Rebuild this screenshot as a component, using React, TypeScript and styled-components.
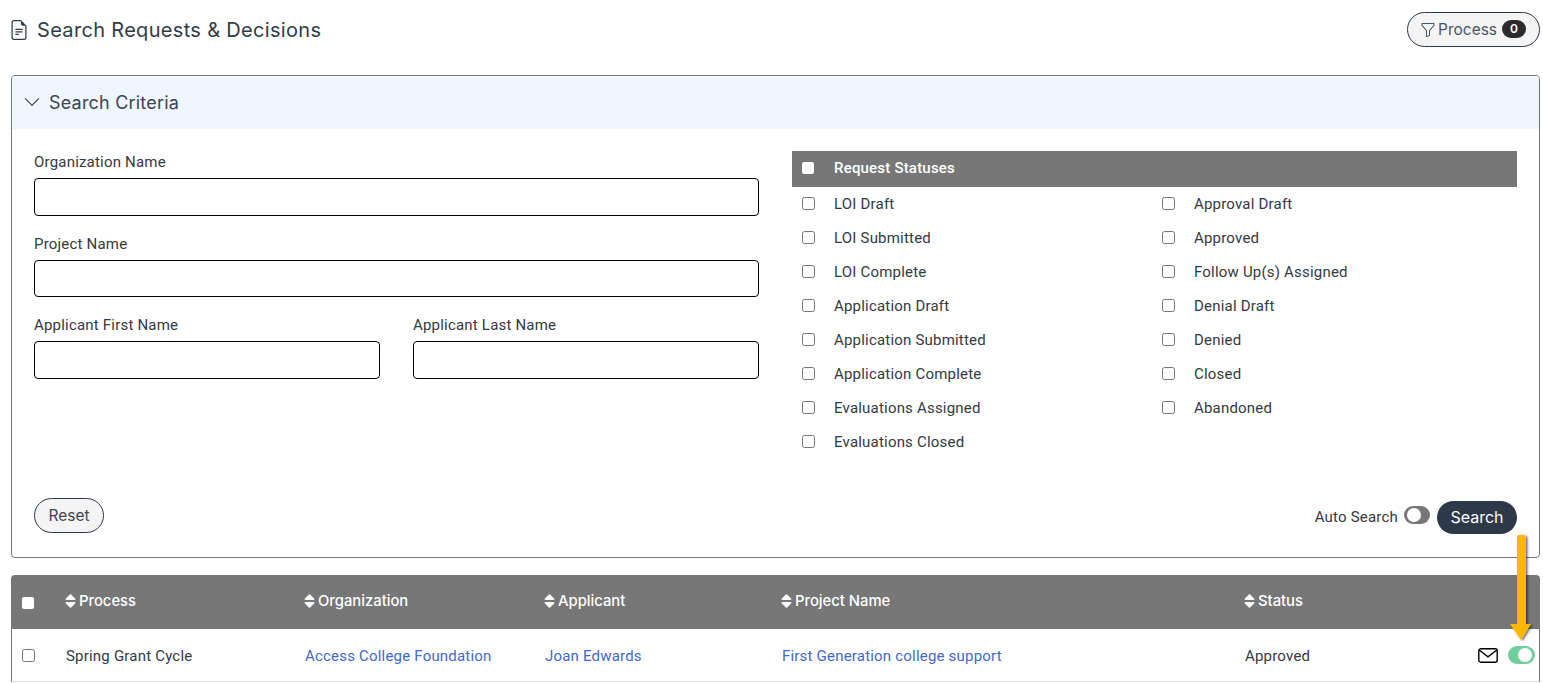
import React from 'react';
import styled, { createGlobalStyle } from 'styled-components';
import { BsChevronDown, BsFileEarmarkText, BsFunnel } from 'react-icons/bs';
import { FaSort } from 'react-icons/fa';

const heading = `'Inter', 'Open Sans', sans-serif`;
const body = `'Roboto', 'Liberation Sans', sans-serif`;

const GlobalStyle = createGlobalStyle`
    html, body {
        margin: 0;
        height: 100%;
        overflow: hidden;
        background: #fff;
    }
    * {
        box-sizing: border-box;
    }
`;

const Page = styled.div`
    position: relative;
    width: 1543px;
    height: 683px;
    overflow: hidden;
    padding: 0 3px 0 11px;
    font-family: ${body};
    font-size: 15px;
    letter-spacing: 0.2px;
    color: #333a42;
`;

const TitleRow = styled.div`
    height: 75px;
    padding-top: 12px;
    display: flex;
    align-items: flex-start;
    justify-content: space-between;
`;

const Title = styled.h1`
    margin: 0;
    height: 36px;
    display: flex;
    align-items: center;
    gap: 8.5px;
    font-family: ${heading};
    font-weight: 400;
    font-size: 20px;
    letter-spacing: 0.32px;
    color: #323c48;
    svg {
        font-size: 20px;
        margin-left: -2.5px;
    }
`;

const ProcessButton = styled.button`
    width: 133px;
    height: 35px;
    padding: 0 0 0 12px;
    display: flex;
    align-items: center;
    border: 1px solid #2d3848;
    border-radius: 18px;
    background: #f4f4f4;
    font-family: ${heading};
    font-size: 15.5px;
    color: #4a5563;
    svg {
        font-size: 16px;
        margin-right: 2px;
    }
`;

const CountBadge = styled.span`
    margin-left: 5px;
    margin-top: -1px;
    width: 24px;
    height: 18px;
    border-radius: 9px;
    background: #2b2b2b;
    color: #fff;
    font-size: 12px;
    font-weight: 600;
    line-height: 18px;
    text-align: center;
`;

const Panel = styled.section`
    height: 483px;
    border: 1px solid #777;
    border-radius: 4px;
    overflow: hidden;
`;

const PanelHeader = styled.div`
    height: 53px;
    padding: 0 0 1px 11px;
    display: flex;
    align-items: center;
    gap: 8px;
    background: #eff6fd;
    font-family: ${heading};
    font-size: 18px;
    letter-spacing: 0.2px;
    color: #3c4552;
    svg {
        font-size: 18px;
    }
`;

const PanelBody = styled.div`
    height: 428px;
    padding: 22px 22px 0;
    display: flex;
    flex-direction: column;
`;

const CriteriaGrid = styled.div`
    height: 346px;
    display: grid;
    grid-template-columns: 725px 725px;
    column-gap: 33px;
`;

const Fields = styled.div`
    display: grid;
    grid-template-columns: 346px 346px;
    column-gap: 33px;
    grid-auto-rows: 81.5px;
`;

const Field = styled.label<{ $wide?: boolean }>`
    grid-column: ${(p) => (p.$wide ? '1 / -1' : 'auto')};
    display: flex;
    flex-direction: column;
    gap: 7px;
    line-height: 18px;
    padding-top: 2px;
`;

const TextInput = styled.input`
    width: 100%;
    height: 37.5px;
    flex: none;
    border: 1px solid #000;
    border-radius: 4px;
    background: #fff;
`;

const StatusHeader = styled.div`
    height: 36px;
    padding: 0 0 2px 10px;
    display: flex;
    align-items: center;
    gap: 20px;
    background: #777;
    color: #fff;
    font-weight: 500;
`;

const StatusGrid = styled.div`
    display: grid;
    grid-template-columns: 360px 1fr;
    grid-template-rows: repeat(8, 34px);
    grid-auto-flow: column;
`;

const StatusRow = styled.label`
    padding-left: 10px;
    display: flex;
    align-items: center;
    gap: 19px;
`;

const Check = styled.span<{ $filled?: boolean }>`
    width: ${(p) => (p.$filled ? '12px' : '13px')};
    height: ${(p) => (p.$filled ? '12px' : '13px')};
    flex: none;
    margin-bottom: 1px;
    border: 1px solid ${(p) => (p.$filled ? '#fff' : '#767676')};
    border-radius: ${(p) => (p.$filled ? '1.5px' : '2.5px')};
    background: ${(p) => (p.$filled ? '#fff' : 'transparent')};
`;

const ActionRow = styled.div`
    height: 36px;
    display: flex;
    align-items: center;
    justify-content: space-between;
`;

const ResetButton = styled.button`
    width: 70px;
    height: 35px;
    border: 1px solid #2d3848;
    border-radius: 18px;
    background: #f4f4f4;
    font-family: ${heading};
    font-size: 15.5px;
    color: #3c4552;
    padding: 0;
`;

const SearchGroup = styled.div`
    display: flex;
    align-items: center;
    margin-top: 4px;
`;

const AutoLabel = styled.span`
    margin-right: 6px;
`;

const Toggle = styled.span<{ $on?: boolean }>`
    width: ${(p) => (p.$on ? '27px' : '26px')};
    height: 18px;
    padding: 2px 3px;
    margin-bottom: ${(p) => (p.$on ? '0' : '4px')};
    display: flex;
    justify-content: ${(p) => (p.$on ? 'flex-end' : 'flex-start')};
    border-radius: 9px;
    background: ${(p) => (p.$on ? '#6fcf9c' : '#777')};
    &::after {
        content: '';
        width: 14px;
        height: 14px;
        border-radius: 50%;
        background: #fff;
    }
`;

const SearchButton = styled.button`
    width: 80px;
    height: 33px;
    margin-left: 7px;
    border: 0;
    border-radius: 17px;
    background: #2d3848;
    color: #fff;
    font-family: ${heading};
    font-size: 16px;
    padding: 0;
`;

const Table = styled.div`
    margin-top: 17px;
    border-radius: 4px 4px 0 0;
    overflow: hidden;
    width: 1529px;
`;

const columns = '54px 239px 240px 237px 463px 1fr';

const HeadRow = styled.div`
    height: 54px;
    display: grid;
    grid-template-columns: ${columns};
    align-items: center;
    background: #777;
    color: #fff;
    font-family: ${heading};
    font-size: 14.8px;
    font-weight: 500;
    letter-spacing: 0;
`;

const HeadCell = styled.div`
    margin-top: -3px;
    display: flex;
    align-items: center;
    gap: 3px;
    svg {
        width: 11px;
        height: 18px;
    }
`;

const BoxCell = styled.div<{ $head?: boolean }>`
    padding: ${(p) => (p.$head ? '3px' : '1px')} 0 0 ${(p) => (p.$head ? '11px' : '10px')};
    display: flex;
`;

const BodyRow = styled.div`
    height: 53px;
    display: grid;
    grid-template-columns: ${columns};
    align-items: center;
    border-left: 1px solid #777;
    border-right: 1px solid #777;
    border-bottom: 1px solid #ddd;
`;

const Cell = styled.div`
    margin-left: -1px;
    padding: 2px 0 0 1px;
`;

const NameLink = styled.a`
    margin-left: -1px;
    padding: 2px 0 0 1px;
    color: #4169c8;
    text-decoration: none;
`;

const StatusCell = styled(Cell)`
    display: flex;
    align-items: center;
    justify-content: space-between;
`;

const RowActions = styled.div`
    margin-top: -2px;
    display: flex;
    align-items: center;
    gap: 10px;
    padding-right: 4px;
`;

const ArrowOverlay = styled.svg`
    position: absolute;
    left: 1500px;
    top: 530px;
    width: 44px;
    height: 112px;
    overflow: visible;
`;

const leftStatuses = [
    'LOI Draft',
    'LOI Submitted',
    'LOI Complete',
    'Application Draft',
    'Application Submitted',
    'Application Complete',
    'Evaluations Assigned',
    'Evaluations Closed',
];

const rightStatuses = [
    'Approval Draft',
    'Approved',
    'Follow Up(s) Assigned',
    'Denial Draft',
    'Denied',
    'Closed',
    'Abandoned',
];

const headers = ['Process', 'Organization', 'Applicant', 'Project Name', 'Status'];

const MailIcon = () => (
    <svg width="20" height="15" viewBox="0 0 20 15" fill="none" stroke="#000" strokeWidth="1.4">
        <rect x="0.8" y="0.8" width="18.4" height="13.4" rx="2" />
        <path d="M1.2 2 L10 8.8 L18.8 2" />
    </svg>
);

export default function App() {
    return (
        <Page>
            <GlobalStyle />
            <TitleRow>
                <Title>
                    <BsFileEarmarkText />
                    Search Requests &amp; Decisions
                </Title>
                <ProcessButton>
                    <BsFunnel />
                    Process
                    <CountBadge>0</CountBadge>
                </ProcessButton>
            </TitleRow>

            <Panel>
                <PanelHeader>
                    <BsChevronDown />
                    Search Criteria
                </PanelHeader>
                <PanelBody>
                    <CriteriaGrid>
                        <Fields>
                            <Field $wide>
                                Organization Name
                                <TextInput />
                            </Field>
                            <Field $wide>
                                Project Name
                                <TextInput />
                            </Field>
                            <Field>
                                Applicant First Name
                                <TextInput />
                            </Field>
                            <Field>
                                Applicant Last Name
                                <TextInput />
                            </Field>
                        </Fields>
                        <div>
                            <StatusHeader>
                                <Check $filled />
                                Request Statuses
                            </StatusHeader>
                            <StatusGrid>
                                {[...leftStatuses, ...rightStatuses].map((status) => (
                                    <StatusRow key={status}>
                                        <Check />
                                        {status}
                                    </StatusRow>
                                ))}
                            </StatusGrid>
                        </div>
                    </CriteriaGrid>
                    <ActionRow>
                        <ResetButton>Reset</ResetButton>
                        <SearchGroup>
                            <AutoLabel>Auto Search</AutoLabel>
                            <Toggle />
                            <SearchButton>Search</SearchButton>
                        </SearchGroup>
                    </ActionRow>
                </PanelBody>
            </Panel>

            <Table>
                <HeadRow>
                    <BoxCell $head>
                        <Check $filled />
                    </BoxCell>
                    {headers.map((header) => (
                        <HeadCell key={header}>
                            <FaSort />
                            {header}
                        </HeadCell>
                    ))}
                </HeadRow>
                <BodyRow>
                    <BoxCell>
                        <Check />
                    </BoxCell>
                    <Cell>Spring Grant Cycle</Cell>
                    <NameLink href="#">Access College Foundation</NameLink>
                    <NameLink href="#">Joan Edwards</NameLink>
                    <NameLink href="#">First Generation college support</NameLink>
                    <StatusCell>
                        Approved
                        <RowActions>
                            <MailIcon />
                            <Toggle $on />
                        </RowActions>
                    </StatusCell>
                </BodyRow>
            </Table>

            <ArrowOverlay viewBox="0 0 44 112">
                <defs>
                    <filter id="arrowShadow" x="-30%" y="-10%" width="160%" height="120%">
                        <feDropShadow dx="1.5" dy="1" stdDeviation="1" floodColor="#000" floodOpacity="0.6" />
                    </filter>
                </defs>
                <path
                    d="M17 7 Q17 5 19 5 H24 Q26 5 26 7 V94 H31 L21 110 L10 94 H17 Z"
                    fill="#fdb900"
                    filter="url(#arrowShadow)"
                />
            </ArrowOverlay>
        </Page>
    );
}
